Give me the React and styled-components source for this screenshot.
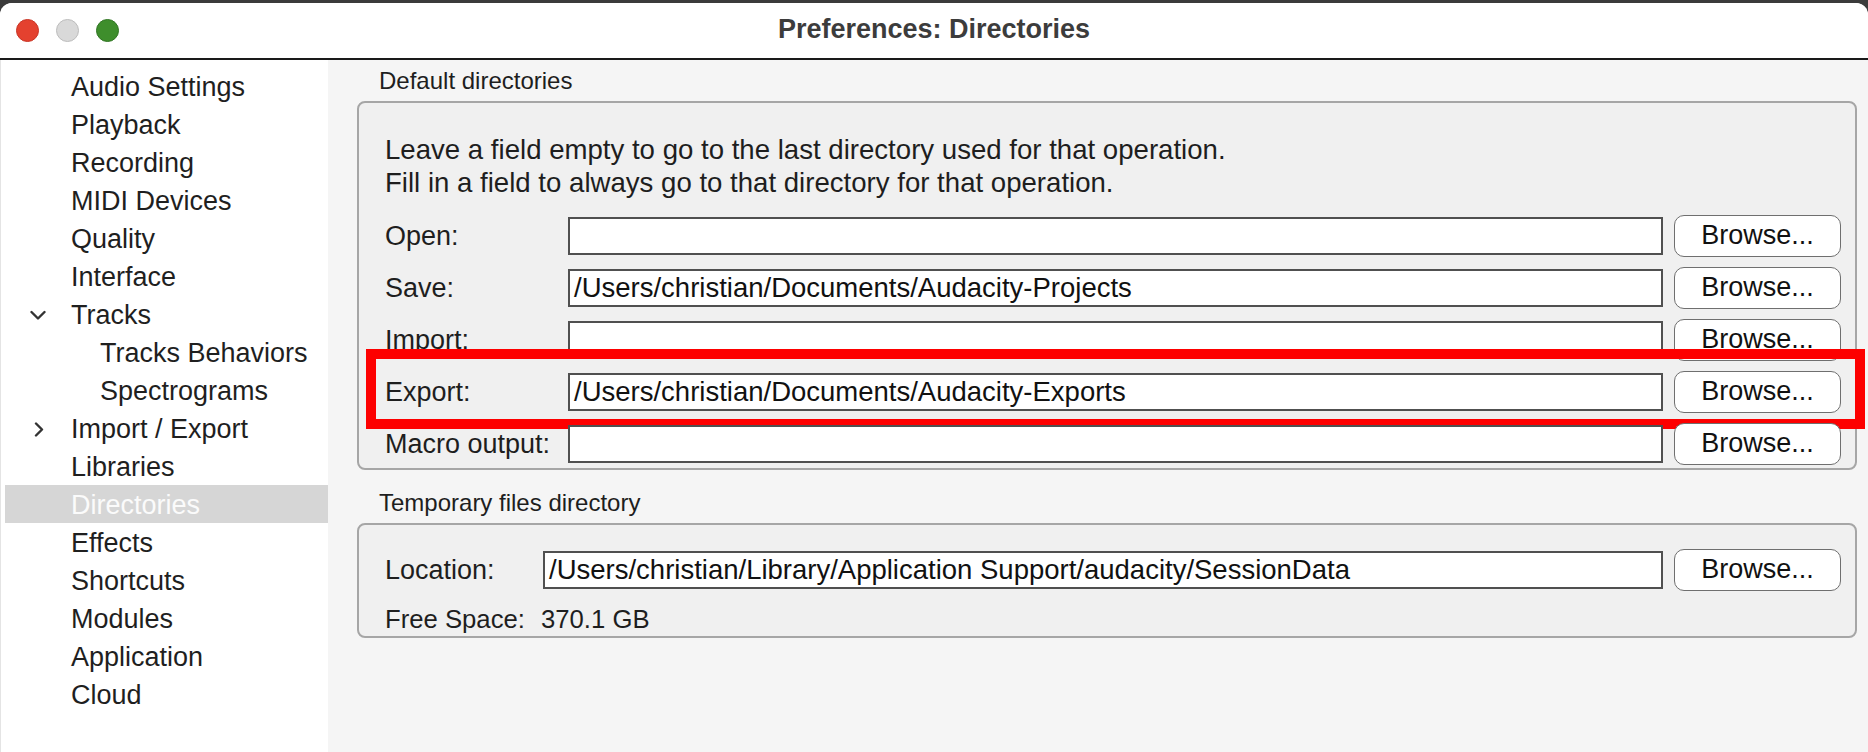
import React from 'react';
import styled, { createGlobalStyle } from 'styled-components';

const pages = [
  { label: 'Audio Settings' },
  { label: 'Playback' },
  { label: 'Recording' },
  { label: 'MIDI Devices' },
  { label: 'Quality' },
  { label: 'Interface' },
  { label: 'Tracks', twisty: 'open' },
  { label: 'Tracks Behaviors', level: 1 },
  { label: 'Spectrograms', level: 1 },
  { label: 'Import / Export', twisty: 'closed' },
  { label: 'Libraries' },
  { label: 'Directories', selected: true },
  { label: 'Effects' },
  { label: 'Shortcuts' },
  { label: 'Modules' },
  { label: 'Application' },
  { label: 'Cloud' }
];

const defaultDirs = [
  { label: 'Open:', value: '' },
  { label: 'Save:', value: '/Users/christian/Documents/Audacity-Projects' },
  { label: 'Import:', value: '' },
  { label: 'Export:', value: '/Users/christian/Documents/Audacity-Exports', marked: true },
  { label: 'Macro output:', value: '' }
];

const GlobalStyle = createGlobalStyle`
  *, *::before, *::after { box-sizing: border-box; }
  html, body { margin: 0; padding: 0; height: 100%; }
  body {
    background: #3b3b3b;
    font-family: "Liberation Sans", Arial, sans-serif;
    color: #1e1e1e;
    overflow: hidden;
  }
  #root { height: 100%; }
`;

const Window = styled.div`
  margin-top: 3px;
  height: calc(100% - 3px);
  display: flex;
  flex-direction: column;
  background: #f5f5f5;
  border-radius: 12px 12px 0 0;
  overflow: hidden;
`;

const TitleBar = styled.div`
  height: 57px;
  flex: none;
  display: grid;
  grid-template-columns: 1fr auto 1fr;
  align-items: center;
  background: #fff;
  border-bottom: 2px solid #1a1a1a;
`;

const Lights = styled.div`
  display: flex;
  gap: 17px;
  padding-left: 16px;
`;

const Light = styled.span`
  width: 23px;
  height: 23px;
  border-radius: 50%;
  background: ${p => p.$fill};
  border: 1px solid ${p => p.$edge};
`;

const Title = styled.div`
  font-size: 27px;
  font-weight: 700;
  color: #3c3c3c;
  padding-bottom: 2px;
`;

const Body = styled.div`
  flex: 1;
  display: flex;
  min-height: 0;
`;

const Sidebar = styled.nav`
  width: 328px;
  flex: none;
  background: #fff;
  padding: 7px 0 0 4px;
  border-left: 1px solid #e4e4e4;
`;

const Item = styled.div`
  height: 38px;
  display: flex;
  align-items: center;
  padding-top: 3px;
  font-size: 27px;
  color: ${p => (p.$selected ? '#fbfbfb' : '#1f1f1f')};
  background: ${p => (p.$selected ? '#d6d6d6' : 'transparent')};
  white-space: nowrap;
`;

const Twisty = styled.span`
  width: 41px;
  margin-left: 25px;
  flex: none;
  display: flex;
  align-items: center;
  color: #333;
`;

const ItemLabel = styled.span`
  margin-left: ${p => (p.$level || 0) * 29}px;
`;

const Panel = styled.main`
  flex: 1;
  padding: 0 11px 0 29px;
`;

const GroupTitle = styled.div`
  height: 41px;
  display: flex;
  align-items: center;
  padding-left: 22px;
  margin-top: ${p => p.$gap || 0}px;
  font-size: 24px;
  color: #1e1e1e;
`;

const GroupBox = styled.section`
  border: 2px solid #a6a6a6;
  border-radius: 8px;
  background: #f0f0f0;
  padding: ${p => p.$pad};
`;

const Intro = styled.p`
  margin: 0 0 16px;
  font-size: 27.6px;
  line-height: 33px;
`;

const Rows = styled.div`
  display: flex;
  flex-direction: column;
  gap: 10px;
`;

const Row = styled.div`
  position: relative;
  height: 42px;
  display: grid;
  grid-template-columns: ${p => p.$labelWidth - 11}px 1fr 167px;
  column-gap: 11px;
  align-items: center;
  font-size: 27px;
`;

const RowLabel = styled.span`
  white-space: nowrap;
`;

const PathField = styled.div`
  height: 38px;
  border: 2px solid #505050;
  background: #fff;
  padding: 0 4px;
  font-size: 27.5px;
  line-height: 34px;
  white-space: nowrap;
  overflow: hidden;
  color: #111;
`;

const BrowseButton = styled.button`
  height: 42px;
  border: 1.5px solid #6f6f6f;
  border-radius: 10px;
  background: #fff;
  font-family: inherit;
  font-size: 27px;
  color: #111;
  padding: 0 0 2px;
`;

const Marker = styled.div`
  position: absolute;
  top: -22px;
  bottom: -16px;
  left: -19px;
  right: -24px;
  border: 10px solid #fd0000;
  pointer-events: none;
`;

const InfoLine = styled.div`
  display: grid;
  grid-template-columns: 156px 1fr;
  margin-top: 11.5px;
  font-size: 25.7px;
  line-height: 33px;
`;

function Chevron({ open }) {
  return open ? (
    <svg width="16" height="11" viewBox="0 0 16 11">
      <polyline points="1.5,2 8,8.5 14.5,2" fill="none" stroke="currentColor" strokeWidth="2.4" strokeLinecap="round" strokeLinejoin="round" />
    </svg>
  ) : (
    <svg width="10" height="15" viewBox="0 0 10 15" style={{ marginLeft: 4 }}>
      <polyline points="2,1.5 8,7.5 2,13.5" fill="none" stroke="currentColor" strokeWidth="2.4" strokeLinecap="round" strokeLinejoin="round" />
    </svg>
  );
}

function DirRow({ label, value, labelWidth, marked }) {
  return (
    <Row $labelWidth={labelWidth}>
      <RowLabel>{label}</RowLabel>
      <PathField>{value}</PathField>
      <BrowseButton>Browse...</BrowseButton>
      {marked && <Marker />}
    </Row>
  );
}

export default function App() {
  return (
    <>
      <GlobalStyle />
      <Window>
        <TitleBar>
          <Lights>
            <Light $fill="#e4412f" $edge="#c93526" />
            <Light $fill="#d9d9d9" $edge="#bdbdbd" />
            <Light $fill="#3e8e2c" $edge="#317624" />
          </Lights>
          <Title>Preferences: Directories</Title>
          <div />
        </TitleBar>
        <Body>
          <Sidebar>
            {pages.map(page => (
              <Item key={page.label} $selected={page.selected}>
                <Twisty>{page.twisty && <Chevron open={page.twisty === 'open'} />}</Twisty>
                <ItemLabel $level={page.level}>{page.label}</ItemLabel>
              </Item>
            ))}
          </Sidebar>
          <Panel>
            <GroupTitle>Default directories</GroupTitle>
            <GroupBox $pad="30px 14px 3px 26px">
              <Intro>
                Leave a field empty to go to the last directory used for that operation.
                <br />
                Fill in a field to always go to that directory for that operation.
              </Intro>
              <Rows>
                {defaultDirs.map(dir => (
                  <DirRow key={dir.label} labelWidth={183} {...dir} />
                ))}
              </Rows>
            </GroupBox>
            <GroupTitle $gap={12}>Temporary files directory</GroupTitle>
            <GroupBox $pad="24px 14px 0.5px 26px">
              <DirRow
                label="Location:"
                value="/Users/christian/Library/Application Support/audacity/SessionData"
                labelWidth={158}
              />
              <InfoLine>
                <span>Free Space:</span>
                <span>370.1 GB</span>
              </InfoLine>
            </GroupBox>
          </Panel>
        </Body>
      </Window>
    </>
  );
}
